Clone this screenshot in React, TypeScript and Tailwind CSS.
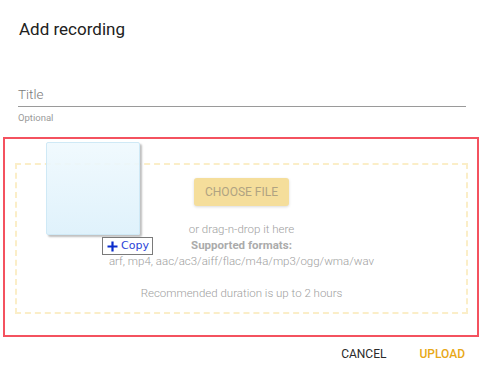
import React from "react";

export default function App() {
  return (
    <div
      className="relative w-[484px] h-[373px] bg-white overflow-hidden"
      style={{ fontFamily: "Roboto, 'Liberation Sans', sans-serif" }}
    >
      <div className="pt-[17px] pl-[19px] text-[17px] leading-[24px] font-normal text-[#212121]">
        Add recording
      </div>
      <div className="mt-[43px] mx-[18px]">
        <div className="border-b border-[#9a9a9a] pb-[2px] text-[13.5px] leading-[20px] font-light text-[#7a7a7a]">
          Title
        </div>
        <div className="mt-[5px] text-[9.5px] leading-[12px] text-[#9a9a9a]">Optional</div>
      </div>
      <div className="mt-[13px] ml-[3px] w-[476px] h-[200px] border-2 border-[#f4525f] pt-[24px] pl-[10px]">
        <div className="w-[453px] h-[151px] border-2 border-dashed border-[#fbeec8] flex flex-col items-center pt-[13px]">
          <div className="w-[95px] h-[28px] rounded-[3px] bg-[#f5de9b] shadow-[0_1px_3px_rgba(0,0,0,0.15)] flex items-center justify-center text-[12px] font-normal text-[#b0a382]">
            CHOOSE FILE
          </div>
          <div className="mt-[15px] text-[11.5px] leading-[16px] font-light text-[#a0a0a0] text-center">
            <div>or drag-n-drop it here</div>
            <div className="font-bold text-[#ababab]">Supported formats:</div>
            <div>arf, mp4, aac/ac3/aiff/flac/m4a/mp3/ogg/wma/wav</div>
            <div className="mt-[16px]">Recommended duration is up to 2 hours</div>
          </div>
        </div>
      </div>
      <div className="flex justify-end items-center gap-[33px] pr-[19px] mt-[9px] text-[12px] font-normal leading-[16px]">
        <span className="text-[#2a2a2a]">CANCEL</span>
        <span className="text-[#e8a817] font-medium">UPLOAD</span>
      </div>

      <div className="absolute left-[46px] top-[142px] w-[94px] h-[93px] rounded-[2px] border border-[#cfe9f6] bg-gradient-to-b from-[#eff9fe]/90 to-[#def1fb]/95 shadow-[2px_2px_2px_rgba(0,0,0,0.25)]" />
      <div className="absolute left-[102px] top-[237px] w-[51px] h-[18px] border border-[#7a7a7a] bg-white flex items-center pl-[4px] gap-[3px] text-[#2a44d8]">
        <svg width="11" height="11" viewBox="0 0 11 11">
          <path d="M5.5 0.5v10M0.5 5.5h10" stroke="#0a2ccc" strokeWidth="2.2" />
        </svg>
        <span className="text-[11px] leading-[14px]" style={{ fontFamily: "'DejaVu Sans', sans-serif" }}>Copy</span>
      </div>
    </div>
  );
}
